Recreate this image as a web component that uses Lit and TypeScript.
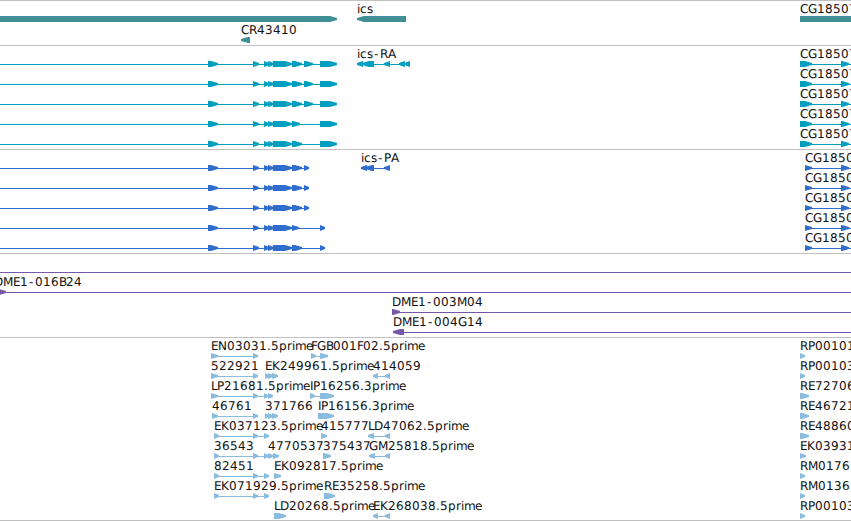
import {LitElement, html, svg, css} from 'lit';
import {customElement, property} from 'lit/decorators.js';
import {map} from 'lit/directives/map.js';

type Span = [number, number];

interface Feature {
  x?: number;
  label?: string;
  line?: Span;
  exons?: Span[];
  reverse?: boolean;
}

interface TrackData {
  kind: string;
  lanes: Feature[][];
}

const advances: Record<string, number> = {
  C: 8, R: 8, G: 9, D: 9, M: 10, E: 7, N: 9, K: 8, L: 6, P: 7, F: 6, B: 7, I: 3, A: 8,
  '-': 7, '.': 4, p: 8, r: 5, i: 3, m: 11, e: 7, c: 7, s: 6,
};

// x position of every character, on whole pixels
function charPositions(label: string, start: number) {
  let x = start;
  return [...label].map((char) => {
    const at = char === '-' ? x + 1 : x;
    x += advances[char] ?? 8;
    return at;
  }).join(' ');
}

const f = (x: number, label: string, exons: Span[], reverse = false): Feature => ({x, label, exons, reverse});

const head: Span[] = [[208, 218], [253, 259], [264, 269], [268, 274], [273, 292]];
const tailExon: Span = [320, 337];

const transcript = (exons: Span[]): Feature => ({line: [0, exons[exons.length - 1][0]], exons: [...head, ...exons]});
const rightRna: Feature = {x: 800, label: 'CG18507', line: [800, 851], exons: [[800, 812], [841, 849]]};
const rightCds: Feature = {x: 805, label: 'CG18507', line: [805, 851], exons: [[805, 812], [841, 849]]};

const tracks: TrackData[] = [
  {
    kind: 'gene',
    lanes: [
      [
        {exons: [[-10, 337]]},
        f(357, 'ics', [[357, 406]], true),
        f(800, 'CG18507', [[800, 870]]),
      ],
      [f(241, 'CR43410', [[241, 250]], true)],
    ],
  },
  {
    kind: 'rna',
    lanes: [
      [
        transcript([[292, 302], [304, 313], tailExon]),
        f(357, 'ics-RA', [[357, 363], [362, 374], [384, 390], [399, 405], [404, 410]], true),
        rightRna,
      ],
      [transcript([[292, 302], [304, 313], tailExon]), rightRna],
      [transcript([[292, 302], [304, 313], tailExon]), rightRna],
      [transcript([[292, 300], tailExon]), rightRna],
      [transcript([[292, 302], tailExon]), rightRna],
    ],
  },
  {
    kind: 'cds',
    lanes: [
      [
        transcript([[292, 302], [304, 309]]),
        f(361, 'ics-PA', [[361, 367], [365, 374], [384, 390]], true),
        rightCds,
      ],
      [transcript([[292, 302], [304, 309]]), rightCds],
      [transcript([[292, 302], [304, 309]]), rightCds],
      [transcript([[292, 299], [320, 325]]), rightCds],
      [transcript([[292, 302], [320, 325]]), rightCds],
    ],
  },
  {
    kind: 'bac',
    lanes: [
      [{line: [0, 851]}],
      [{x: -6, label: 'DME1-016B24', line: [0, 851], exons: [[-5, 6]]}],
      [{x: 392, label: 'DME1-003M04', line: [392, 851], exons: [[392, 400]]}],
      [{x: 393, label: 'DME1-004G14', line: [393, 851], exons: [[393, 404]], reverse: true}],
    ],
  },
  {
    kind: 'est',
    lanes: [
      [
        f(211, 'EN03031.5prime', [[211, 218], [253, 258]]),
        f(311, 'FGB001F02.5prime', [[311, 316], [320, 328]]),
        f(800, 'RP00101', [[800, 805]]),
      ],
      [
        f(211, '522921', [[211, 218], [253, 258]]),
        f(265, 'EK249961.5prime', [[265, 269], [268, 273], [272, 278]]),
        f(373, '414059', [[373, 378], [385, 390]], true),
        f(800, 'RP00103', [[800, 805]]),
      ],
      [
        f(211, 'LP21681.5prime', [[211, 218], [253, 258], [264, 268], [268, 273]]),
        f(310, 'IP16256.3prime', [[310, 315], [320, 334]]),
        f(800, 'RE72706', [[800, 809]]),
      ],
      [
        f(212, '46761', [[212, 218], [253, 258]]),
        f(265, '371766', [[265, 269], [268, 273], [272, 278]]),
        f(318, 'IP16156.3prime', [[318, 334]]),
        f(800, 'RE46721', [[800, 809]]),
      ],
      [
        f(214, 'EK037123.5prime', [[214, 219], [253, 258], [264, 269]]),
        f(321, '415777', [[321, 327]]),
        f(368, 'LD47062.5prime', [[368, 374], [385, 390]], true),
        f(800, 'RE48860', [[800, 809]]),
      ],
      [
        f(214, '36543', [[214, 219], [253, 258], [264, 268], [268, 273], [273, 279]]),
        f(268, '4770537', []),
        f(323, '375437', [[323, 331]]),
        f(369, 'GM25818.5prime', [[369, 375], [385, 390]], true),
        f(800, 'EK03931', [[800, 806]]),
      ],
      [
        f(214, '82451', [[214, 219], [253, 258], [264, 269]]),
        f(274, 'EK092817.5prime', [[274, 281]]),
        f(800, 'RM0176', [[800, 805]]),
      ],
      [
        f(214, 'EK071929.5prime', [[214, 219], [253, 258], [264, 269]]),
        f(324, 'RE35258.5prime', [[324, 335]]),
        f(800, 'RM0136', [[800, 805]]),
      ],
      [
        f(274, 'LD20268.5prime', [[274, 286]]),
        f(373, 'EK268038.5prime', [[373, 378], [385, 390]], true),
        f(800, 'RP00103', [[800, 805]]),
      ],
    ],
  },
];

@customElement('genome-track')
export class GenomeTrack extends LitElement {
  @property({attribute: false}) lanes: Feature[][] = [];

  static styles = css`
    :host {
      display: flex;
      flex-direction: column;
      box-sizing: border-box;
      padding-top: 1px;
      border-top: 1px solid #c0c0c0;
    }

    .lane {
      display: block;
      flex: none;
      width: 851px;
      height: 20px;
      fill: currentColor;
    }

    .label {
      font-family: 'DejaVu Sans', sans-serif;
      font-size: 12px;
      text-rendering: geometricPrecision;
      fill: #111;
    }
  `;

  exon([start, end]: Span, reverse = false) {
    const tip = Math.min(end - start, 7);
    const points = reverse
      ? `${end},14 ${start + tip},14 ${start},16 ${start},18 ${start + tip},20 ${end},20`
      : `${start},14 ${end - tip},14 ${end},16 ${end},18 ${end - tip},20 ${start},20`;
    return svg`<polygon points=${points} />`;
  }

  feature({x, label, line, exons = [], reverse}: Feature) {
    const span = line ?? (exons.length > 1 ? [exons[0][0], exons[exons.length - 1][1]] : null);
    return svg`
      ${span ? svg`<rect x=${span[0]} y="17" width=${span[1] - span[0]} height="1" />` : ''}
      ${map(exons, (exon) => this.exon(exon, reverse))}
      ${label ? svg`<text class="label" x=${charPositions(label, x!)} y="11">${label}</text>` : ''}
    `;
  }

  render() {
    return html`
      ${map(this.lanes, (lane) => html`
        <svg class="lane" viewBox="0 0 851 20">${map(lane, (item) => this.feature(item))}</svg>
      `)}
    `;
  }
}

@customElement('app-root')
export class AppRoot extends LitElement {
  static styles = css`
    :host {
      display: flex;
      flex-direction: column;
      box-sizing: border-box;
      width: 851px;
      height: 521px;
      overflow: hidden;
      background: #fff;
      border-bottom: 1px solid #c0c0c0;
    }

    genome-track {
      flex: none;
      height: 104px;
    }

    .gene {
      height: 45px;
      gap: 1px;
      color: #408f94;
    }

    .rna {
      color: #009fc0;
    }

    .cds {
      color: #316dcc;
    }

    .bac {
      height: 84px;
      color: #7757a8;
    }

    .est {
      height: 183px;
      color: #89bcde;
    }
  `;

  render() {
    return html`${map(tracks, (track) => html`<genome-track class=${track.kind} .lanes=${track.lanes}></genome-track>`)}`;
  }
}
